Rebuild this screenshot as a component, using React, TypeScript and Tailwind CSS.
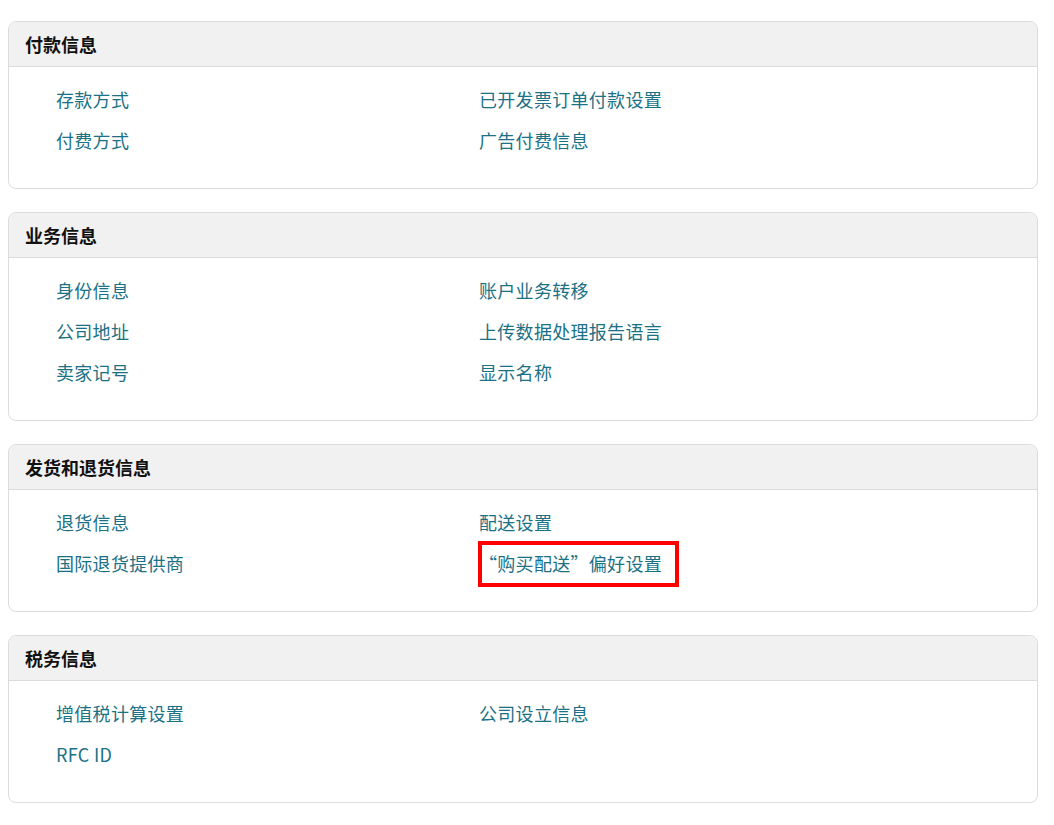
const sections: { title: string; left: string[]; right: string[]; highlight?: string }[] = [
  {
    title: '付款信息',
    left: ['存款方式', '付费方式'],
    right: ['已开发票订单付款设置', '广告付费信息'],
  },
  {
    title: '业务信息',
    left: ['身份信息', '公司地址', '卖家记号'],
    right: ['账户业务转移', '上传数据处理报告语言', '显示名称'],
  },
  {
    title: '发货和退货信息',
    left: ['退货信息', '国际退货提供商'],
    right: ['配送设置', '“购买配送”偏好设置'],
    highlight: '“购买配送”偏好设置',
  },
  {
    title: '税务信息',
    left: ['增值税计算设置', 'RFC ID'],
    right: ['公司设立信息'],
  },
]

function LinkList({ items, highlight }: { items: string[]; highlight?: string }) {
  return (
    <div className="flex flex-col">
      {items.map((item) => (
        <div key={item} className="h-[41px] flex items-center">
          <span className="relative">
            <a href="#" className="text-[#1b7185]">{item}</a>
            {item === highlight && (
              <span className="absolute -left-[1px] -top-[9px] w-[201px] h-[46px] border-[4px] border-[#ff0000]" />
            )}
          </span>
        </div>
      ))}
    </div>
  )
}

export default function App() {
  return (
    <div
      className="min-h-screen bg-white pt-[21px] pl-[8px] pr-[16px] flex flex-col gap-[23px]"
      style={{ fontFamily: '"Microsoft YaHei", "Noto Sans CJK SC", sans-serif' }}
    >
      {sections.map((s) => (
        <div key={s.title} className="border border-[#dcdcdc] rounded-[8px] overflow-hidden">
          <div className="h-[45px] bg-[#f1f1f1] border-b border-[#dcdcdc] px-[16px] flex items-center">
            <h2 className="text-[18px] font-bold text-[#111]">{s.title}</h2>
          </div>
          <div className="grid grid-cols-[423px_1fr] pl-[47px] pt-[12px] pb-[27px] text-[18px] tracking-[0.3px]">
            <LinkList items={s.left} />
            <LinkList items={s.right} highlight={s.highlight} />
          </div>
        </div>
      ))}
    </div>
  )
}
